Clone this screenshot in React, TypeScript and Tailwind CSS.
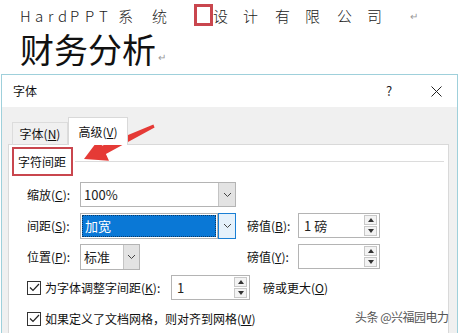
import React from "react";

const FONT = '"Noto Sans CJK SC", "Noto Sans", sans-serif';

const line1 = ["H", "a", "r", "d", "P", "P", "T", "系", "统", "BOX", "设", "计", "有", "限", "公", "司", "↵"];

function Chevron() {
  return (
    <svg width="9" height="6" viewBox="0 0 9 6">
      <polyline points="1,1 4.5,4.5 8,1" fill="none" stroke="#444" strokeWidth="1" />
    </svg>
  );
}

function Spin({ value, w }: { value: string; w: string }) {
  return (
    <div className={`flex h-[25px] border border-[#b4b4b4] bg-white ${w}`}>
      <div className="flex-1 pl-[5px] flex items-center text-[13px] text-[#222]">{value}</div>
      <div className="flex flex-col gap-[1px] py-[1px] pr-[2px]">
        <div className="w-[13px] flex-1 bg-[#f3f3f3] border border-[#c8c8c8] flex items-center justify-center">
          <svg width="6" height="4" viewBox="0 0 6 4"><polygon points="0,4 3,0 6,4" fill="#333" /></svg>
        </div>
        <div className="w-[13px] flex-1 bg-[#f3f3f3] border border-[#c8c8c8] flex items-center justify-center">
          <svg width="6" height="4" viewBox="0 0 6 4"><polygon points="0,0 6,0 3,4" fill="#333" /></svg>
        </div>
      </div>
    </div>
  );
}

function Check() {
  return (
    <div className="w-[14px] h-[14px] border border-[#333] bg-white flex items-center justify-center">
      <svg width="11" height="9" viewBox="0 0 11 9">
        <polyline points="1,4.5 4,7.5 10,1" fill="none" stroke="#222" strokeWidth="1.2" />
      </svg>
    </div>
  );
}

export default function App() {
  return (
    <div className="relative w-[460px] h-[333px] overflow-hidden bg-white" style={{ fontFamily: FONT }}>
      {/* document area */}
      <div className="h-[72px] pl-[20px]">
        <div className="grid grid-cols-[15px_13px_10px_12px_15px_14px_19px_34px_42px_19px_30px_32px_30px_32px_30px_43px_12px] items-center h-[26px] mt-[2px] text-[15px] font-light text-[#222] leading-none">
          {line1.map((c, i) =>
            c === "BOX" ? (
              <div key={i} className="w-[19px] h-[22px] border-[3px] border-[#c9464e]" />
            ) : c === "↵" ? (
              <span key={i} className="text-[10px] text-[#999] mt-[2px]">↵</span>
            ) : (
              <span key={i}>{c}</span>
            )
          )}
        </div>
        <div className="flex items-end mt-[3px] h-[36px]">
          <span className="text-[34px] leading-[36px] text-[#111]">财务分析</span>
          <span className="text-[10px] text-[#999] ml-[2px] mb-[3px]">↵</span>
        </div>
      </div>

      {/* dialog */}
      <div className="ml-[1px] w-[457px] h-[261px] border border-b-0 border-[#9fd0db] flex flex-col">
        <div className="h-[32px] shrink-0 bg-white flex items-center pl-[11px] text-[12px] text-[#111]">
          <span>字体</span>
          <div className="ml-auto w-[52px] flex justify-center text-[13px] text-[#222]">?</div>
          <div className="w-[42px] flex justify-center">
            <svg width="11" height="11" viewBox="0 0 11 11">
              <line x1="0.5" y1="0.5" x2="10.5" y2="10.5" stroke="#222" strokeWidth="1" />
              <line x1="10.5" y1="0.5" x2="0.5" y2="10.5" stroke="#222" strokeWidth="1" />
            </svg>
          </div>
        </div>
        <div className="flex-1 bg-[#f0f0f0] pl-[6px] pr-[8px] pt-[10px] flex flex-col">
          {/* tabs */}
          <div className="flex items-end h-[28px] pl-[4px] text-[12px] text-[#111] relative z-10 -mb-[1px]">
            <div className="w-[56px] h-[23px] border border-b-0 border-[#dcdcdc] flex items-center justify-center">
              <span>字体(<span className="underline">N</span>)</span>
            </div>
            <div className="w-[60px] h-[28px] bg-white border border-b-0 border-[#d9d9d9] flex items-center justify-center">
              <span>高级(<span className="underline">V</span>)</span>
            </div>
          </div>
          <div className="flex-1 bg-white border border-[#d9d9d9] pt-[2px] pl-[3px] text-[12px] text-[#111]">
            {/* section header */}
            <div className="flex items-center pr-[4px]">
              <div className="h-[29px] w-[61px] border-2 border-[#c9464e] flex items-center pl-[4px]">
                字符间距
              </div>
              <div className="flex-1 h-px bg-[#dcdcdc] ml-[2px]" />
            </div>

            <div className="pl-[15px] pt-[6px] flex flex-col gap-[6px]">
              {/* row 1 */}
              <div className="flex items-center h-[25px]">
                <div className="w-[53px]">缩放(<span className="underline">C</span>):</div>
                <div className="w-[156px] h-[25px] flex border border-[#b4b4b4] bg-white">
                  <div className="flex-1 flex items-center pl-[3px] text-[13px] text-[#222]">100%</div>
                  <div className="w-[17px] bg-[#e3e3e3] border-l border-[#c4c4c4] flex items-center justify-center"><Chevron /></div>
                </div>
              </div>
              {/* row 2 */}
              <div className="flex items-center h-[25px]">
                <div className="w-[53px]">间距(<span className="underline">S</span>):</div>
                <div className="w-[156px] h-[26px] flex">
                  <div className="flex-1 border border-[#b4b4b4] p-[1px]">
                    <div className="h-full bg-[#0a78d6] border border-dotted border-[#0a3a66] flex items-center pl-[2px] text-[13px] text-white">加宽</div>
                  </div>
                  <div className="w-[18px] bg-[#e5f1fb] border border-[#1a7fd4] flex items-center justify-center"><Chevron /></div>
                </div>
                <div className="w-[11px]" />
                <div className="w-[51px]">磅值(<span className="underline">B</span>):</div>
                <Spin value="1 磅" w="w-[82px]" />
              </div>
              {/* row 3 */}
              <div className="flex items-center h-[25px]">
                <div className="w-[53px]">位置(<span className="underline">P</span>):</div>
                <div className="w-[60px] h-[26px] flex border border-[#b4b4b4] bg-white">
                  <div className="flex-1 flex items-center pl-[3px] text-[13px] text-[#222]">标准</div>
                  <div className="w-[16px] bg-[#e3e3e3] border-l border-[#c4c4c4] flex items-center justify-center"><Chevron /></div>
                </div>
                <div className="w-[107px]" />
                <div className="w-[51px]">磅值(<span className="underline">Y</span>):</div>
                <Spin value="" w="w-[82px]" />
              </div>
              {/* row 4 */}
              <div className="flex items-center h-[25px]">
                <Check />
                <div className="ml-[4px] w-[126px]">为字体调整字间距(<span className="underline">K</span>):</div>
                <Spin value="1" w="w-[79px]" />
                <div className="ml-[13px]">磅或更大(<span className="underline">O</span>)</div>
              </div>
              {/* row 5 */}
              <div className="flex items-center h-[25px]">
                <Check />
                <div className="ml-[4px]">如果定义了文档网格，则对齐到网格(<span className="underline">W</span>)</div>
              </div>
            </div>
          </div>
        </div>
      </div>

      {/* red arrow annotation */}
      <svg className="absolute left-0 top-0 pointer-events-none" width="460" height="333" viewBox="0 0 460 333">
        <polygon
          points="84,159 99,139 102.1,145.8 153.4,124.6 154.6,127.4 105.9,154 109,160.8"
          fill="#e53a36"
        />
      </svg>

      {/* watermark */}
      <div className="absolute left-[355px] top-[309px] text-[12px] leading-[16px] text-[#555] whitespace-nowrap tracking-[-0.5px]">
        头条 @兴福园电力
      </div>
    </div>
  );
}
